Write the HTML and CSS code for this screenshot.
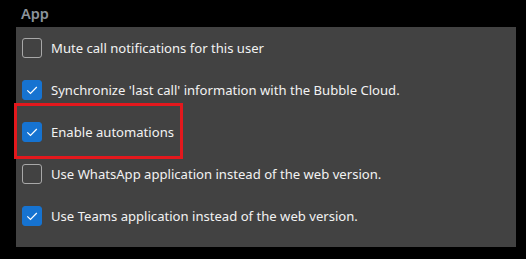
FILE: index.html
```html
<!DOCTYPE html>
<html>
<head>
<meta charset="utf-8">
<link rel="stylesheet" href="styles.css">
</head>
<body>
<div class="page">
  <div class="section-title">App</div>
  <div class="panel">
    <div class="row">
      <span class="box"></span>
      <span class="label">Mute call notifications for this user</span>
    </div>
    <div class="row">
      <span class="box checked"><svg viewBox="0 0 20 20" width="20" height="20"><path d="M5.3 10.3 L8.5 13.5 L14.8 7" fill="none" stroke="#fff" stroke-width="1.2"/></svg></span>
      <span class="label">Synchronize 'last call' information with the Bubble Cloud.</span>
    </div>
    <div class="row highlighted">
      <span class="box checked"><svg viewBox="0 0 20 20" width="20" height="20"><path d="M5.3 10.3 L8.5 13.5 L14.8 7" fill="none" stroke="#fff" stroke-width="1.2"/></svg></span>
      <span class="label">Enable automations</span>
    </div>
    <div class="row">
      <span class="box"></span>
      <span class="label">Use WhatsApp application instead of the web version.</span>
    </div>
    <div class="row">
      <span class="box checked"><svg viewBox="0 0 20 20" width="20" height="20"><path d="M5.3 10.3 L8.5 13.5 L14.8 7" fill="none" stroke="#fff" stroke-width="1.2"/></svg></span>
      <span class="label">Use Teams application instead of the web version.</span>
    </div>
  </div>
</div>
</body>
</html>
```

FILE: styles.css
```css
html, body {
  margin: 0;
  padding: 0;
  background: #000;
}
body {
  width: 526px;
  height: 259px;
  overflow: hidden;
  font-family: "Noto Sans", "Open Sans", sans-serif;
}
.page {
  padding-left: 16px;
}
.section-title {
  height: 27px;
  box-sizing: border-box;
  padding-left: 5px;
  padding-top: 3px;
  font-size: 14.5px;
  font-weight: 600;
  color: #8c939c;
  line-height: 20px;
}
.panel {
  width: 500px;
  height: 220px;
  background: #424242;
  box-sizing: border-box;
  padding: 10.5px 0 0 6px;
  display: flex;
  flex-direction: column;
  gap: 22.2px;
}
.row {
  position: relative;
  height: 20px;
  display: flex;
  align-items: center;
  gap: 9px;
}
.box {
  width: 20px;
  height: 20px;
  box-sizing: border-box;
  border: 1px solid #a8a8a8;
  border-radius: 3px;
  flex: none;
}
.box.checked {
  background: #1673d1;
  border-color: #1673d1;
}
.box svg {
  display: block;
  margin: -1px;
}
.label {
  color: #f2f2f2;
  font-size: 13.1px;
  line-height: 20px;
  white-space: nowrap;
}
.highlighted::before {
  content: "";
  position: absolute;
  left: -8px;
  top: -18.7px;
  width: 169px;
  height: 56px;
  box-sizing: border-box;
  border: 3px solid #e3181d;
}
```
